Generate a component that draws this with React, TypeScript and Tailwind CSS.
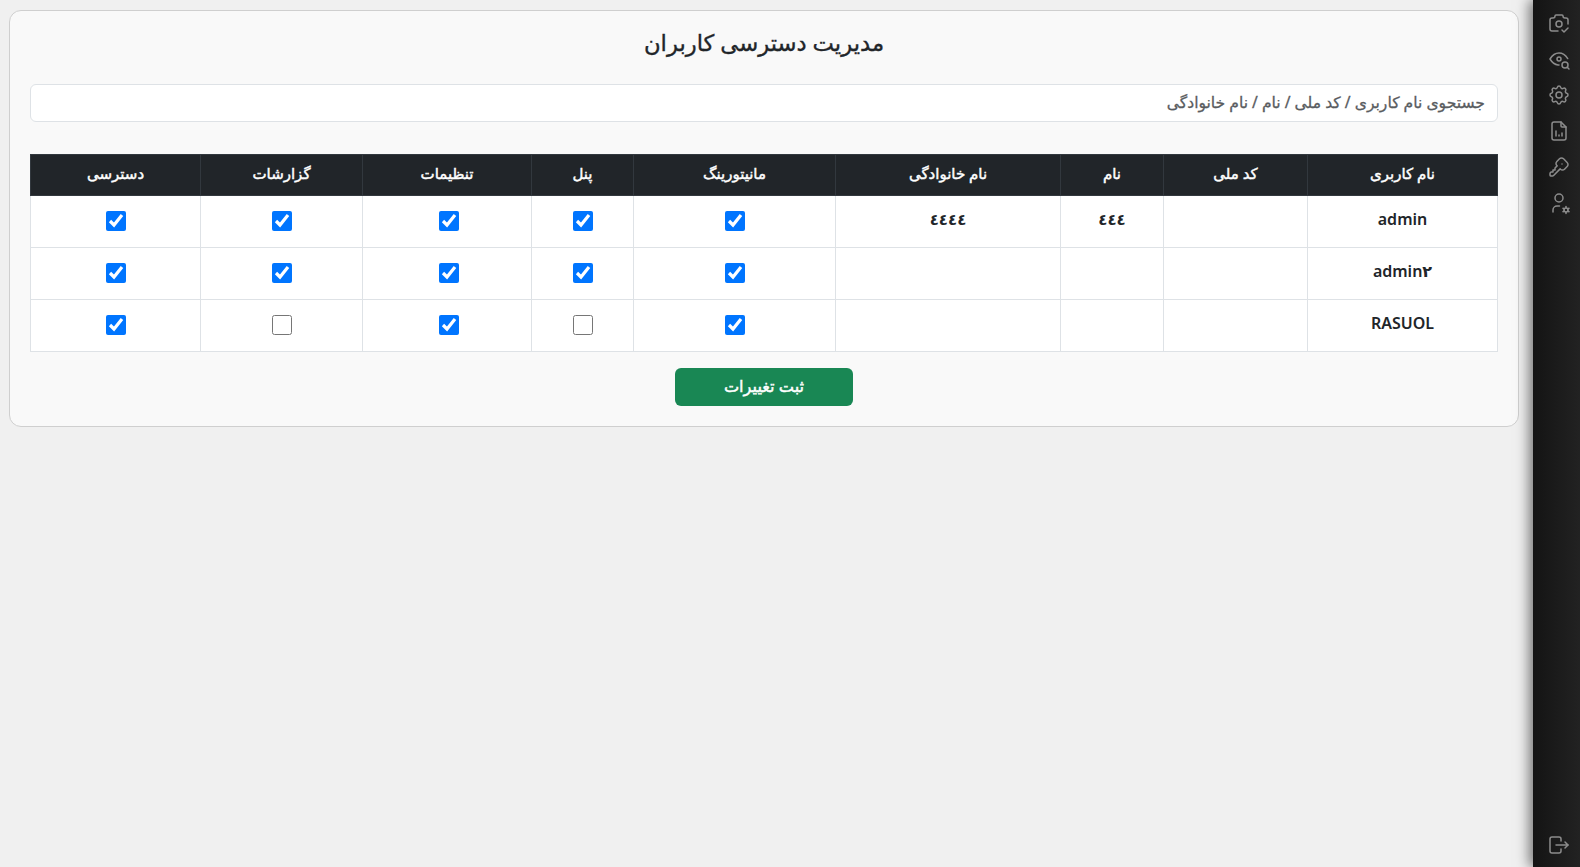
import React from "react";
import { TbCameraCheck, TbEyeSearch, TbSettings, TbFileAnalytics, TbKey, TbUserCog, TbLogout2 } from "react-icons/tb";

const headers = [
  ["نام کاربری", "w-[190px]"],
  ["کد ملی", "w-[144px]"],
  ["نام", "w-[103px]"],
  ["نام خانوادگی", "w-[225px]"],
  ["مانیتورینگ", "w-[202px]"],
  ["پنل", "w-[102px]"],
  ["تنظیمات", "w-[169px]"],
  ["گزارشات", "w-[162px]"],
  ["دسترسی", "w-auto"],
];

const rows: { u: string; c: string; n: string; f: string; p: boolean[] }[] = [
  { u: "admin", c: "", n: "٤٤٤", f: "٤٤٤٤", p: [true, true, true, true, true] },
  { u: "admin٢", c: "", n: "", f: "", p: [true, true, true, true, true] },
  { u: "RASUOL", c: "", n: "", f: "", p: [true, false, true, false, true] },
];

const cellPad = ["", "", "pl-[3px]", "", ""];

const topIcons = [TbCameraCheck, TbEyeSearch, TbSettings, TbFileAnalytics, TbKey, TbUserCog];

export default function App() {
  return (
    <div dir="rtl" className="flex h-[867px] w-[1580px] overflow-hidden bg-[#f0f0f0] font-['Noto_Sans','DejaVu_Sans',sans-serif] text-[#212529]">
      <aside className="relative flex h-full w-[47px] shrink-0 flex-col items-center justify-between bg-linear-to-r from-[#141414] to-[#222222] pb-[10px] pl-[5px] pt-[11px] shadow-[-4px_0_12px_rgba(0,0,0,0.5)] text-[#8c8c8c]">
        <div className="flex flex-col items-center gap-[12px]">
          {topIcons.map((I, i) => (
            <I key={i} className="h-6 w-6" strokeWidth={1.5} />
          ))}
        </div>
        <TbLogout2 className="h-6 w-6 -scale-x-100" strokeWidth={1.5} />
      </aside>
      <main className="flex-1 pr-[14px] pl-[9px] pt-[10px]">
        <section className="flex h-[416.5px] flex-col rounded-[12px] border border-[#cfcfcf] bg-[#f9f9f9] px-[20px] pt-[18px]">
          <h1 className="text-center text-[22.7px] leading-[28px] [-webkit-text-stroke:0.35px_#212529]">مدیریت دسترسی کاربران</h1>
          <input
            dir="rtl"
            placeholder="جستجوی نام کاربری / کد ملی / نام / نام خانوادگی"
            className="mt-[27px] h-[38px] w-full rounded-[6px] border border-[#dee2e6] bg-white px-[12px] pb-[3px] text-[15.6px] text-[#212529] placeholder:text-[#595c5f] outline-none [-webkit-text-stroke:0.3px_#595c5f]"
          />
          <table className="mt-[32px] w-full table-fixed border-collapse text-[16px]">
            <thead>
              <tr className="h-[41px] bg-[#212529] text-white">
                {headers.map(([h, w]) => (
                  <th key={h} className={`${w} border border-[#32383e] pb-[3px] text-[15px] font-normal [-webkit-text-stroke:0.45px_#ffffff]`}>{h}</th>
                ))}
              </tr>
            </thead>
            <tbody>
              {rows.map((r) => (
                <tr key={r.u} className="h-[52px] bg-white">
                  <td className="border border-[#dee2e6] pb-[6px] text-center font-semibold">{r.u}</td>
                  <td className="border border-[#dee2e6] pb-[6px] text-center font-semibold">{r.c}</td>
                  <td className="border border-[#dee2e6] pb-[5px] text-center text-[15px] font-bold">{r.n}</td>
                  <td className="border border-[#dee2e6] pb-[5px] text-center text-[15px] font-bold">{r.f}</td>
                  {r.p.map((p, i) => (
                    <td key={i} className={`${cellPad[i]} border border-[#dee2e6] pb-[2px] text-center`}>
                      <input type="checkbox" defaultChecked={p} className="mx-auto block h-5 w-5" />
                    </td>
                  ))}
                </tr>
              ))}
            </tbody>
          </table>
          <div className="mt-[16px] flex justify-center">
            <button className="h-[38px] w-[178px] rounded-[6px] bg-[#198754] pb-[2px] text-[16.2px] text-white [-webkit-text-stroke:0.45px_#ffffff]">ثبت تغییرات</button>
          </div>
        </section>
      </main>
    </div>
  );
}
